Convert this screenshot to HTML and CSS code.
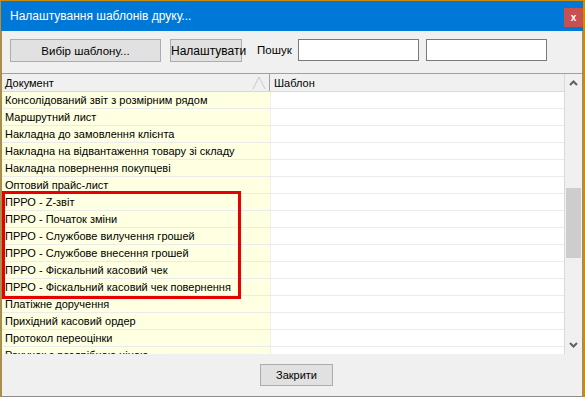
FILE: index.html
```html
<!DOCTYPE html>
<html lang="uk">
<head>
    <meta charset="UTF-8">
    <title>Налаштування шаблонів друку...</title>
    <link rel="stylesheet" href="styles.css">
</head>
<body>

    <div class="window">
        <!-- Title bar -->
        <div class="titlebar">
            <span class="title">Налаштування шаблонів друку...</span>
            <span class="close">x</span>
        </div>

        <div class="body">
            <!-- Toolbar -->
            <div class="toolbar">
                <button class="btn btn-wide">Вибір шаблону...</button>
                <button class="btn btn-setup">Налаштувати</button>
                <span class="search-label">Пошук</span>
                <input class="search" type="text">
                <input class="search" type="text">
            </div>

            <!-- Grid -->
            <div class="grid">
                <div class="grid-main">
                    <div class="grid-head">
                        <div class="col-doc">Документ
                            <svg class="sort" width="14" height="14" viewBox="0 0 14 14">
                                <polyline points="1,13 7,1 13,13" fill="none" stroke="#c8c8c8" stroke-width="1"/>
                            </svg>
                        </div>
                        <div class="col-tpl">Шаблон</div>
                    </div>
                    <div class="rows">
                        <div class="row"><div class="col-doc">Консолідований звіт з розмірним рядом</div><div class="col-tpl"></div></div>
                        <div class="row"><div class="col-doc">Маршрутний лист</div><div class="col-tpl"></div></div>
                        <div class="row"><div class="col-doc">Накладна до замовлення клієнта</div><div class="col-tpl"></div></div>
                        <div class="row"><div class="col-doc">Накладна на відвантаження товару зі складу</div><div class="col-tpl"></div></div>
                        <div class="row"><div class="col-doc">Накладна повернення покупцеві</div><div class="col-tpl"></div></div>
                        <div class="row"><div class="col-doc">Оптовий прайс-лист</div><div class="col-tpl"></div></div>
                        <div class="row"><div class="col-doc">ПРРО - Z-звіт</div><div class="col-tpl"></div></div>
                        <div class="row"><div class="col-doc">ПРРО - Початок зміни</div><div class="col-tpl"></div></div>
                        <div class="row"><div class="col-doc">ПРРО - Службове вилучення грошей</div><div class="col-tpl"></div></div>
                        <div class="row"><div class="col-doc">ПРРО - Службове внесення грошей</div><div class="col-tpl"></div></div>
                        <div class="row"><div class="col-doc">ПРРО - Фіскальний касовий чек</div><div class="col-tpl"></div></div>
                        <div class="row"><div class="col-doc">ПРРО - Фіскальний касовий чек повернення</div><div class="col-tpl"></div></div>
                        <div class="row"><div class="col-doc">Платіжне доручення</div><div class="col-tpl"></div></div>
                        <div class="row"><div class="col-doc">Прихідний касовий ордер</div><div class="col-tpl"></div></div>
                        <div class="row"><div class="col-doc">Протокол переоцінки</div><div class="col-tpl"></div></div>
                        <div class="row"><div class="col-doc">Рахунок з роздрібною ціною</div><div class="col-tpl"></div></div>
                    </div>
                    <!-- highlight frame -->
                    <div class="highlight"></div>
                </div>

                <div class="scrollbar">
                    <svg class="arrow" width="9" height="6" viewBox="0 0 9 6">
                        <polyline points="1,5 4.5,1.5 8,5" fill="none" stroke="#606060" stroke-width="2"/>
                    </svg>
                    <div class="thumb-track">
                        <div class="thumb"></div>
                    </div>
                    <svg class="arrow" width="9" height="6" viewBox="0 0 9 6">
                        <polyline points="1,1 4.5,4.5 8,1" fill="none" stroke="#606060" stroke-width="2"/>
                    </svg>
                </div>
            </div>

            <!-- Footer -->
            <div class="footer">
                <button class="btn btn-close">Закрити</button>
            </div>
        </div>
    </div>

</body>
</html>
```

FILE: styles.css
```css
body {
    margin: 0;
    padding: 0;
    background: #c98b10; /* window behind */
    font-family: "Liberation Sans", Arial, sans-serif;
    font-size: 11px;
    color: #000;
    overflow: hidden;
}

.window {
    margin: 1px 2px 0 1px;
    height: 396px;
    display: flex;
    flex-direction: column;
    background: #f0f0f0;
}

/* Title bar */
.titlebar {
    height: 30px;
    background: #0078d7;
    display: flex;
    align-items: center;
    justify-content: space-between;
    padding-left: 9px;
    flex-shrink: 0;
}
.title {
    color: #fff;
    font-size: 12px;
}
.close {
    width: 19px;
    height: 19px;
    margin-top: 2px;
    background: #c75050;
    color: #fff;
    font-weight: bold;
    font-size: 10px;
    display: flex;
    align-items: center;
    justify-content: center;
}

.body {
    flex: 1;
    display: flex;
    flex-direction: column;
    border: 1px solid #8c8c8c;
    border-top: none;
    min-height: 0;
}

/* Toolbar */
.toolbar {
    height: 42px;
    display: flex;
    align-items: flex-start;
    padding: 8px 0 0 8px;
    box-sizing: border-box;
}
.btn {
    font-family: "Liberation Sans", Arial, sans-serif;
    font-size: 11.5px;
    background: #e1e1e1;
    border: 1px solid #adadad;
    color: #000;
    padding: 0;
    height: 23px;
}
.btn-wide {
    width: 151px;
}
.btn-setup {
    width: 72px;
    margin-left: 9px;
    font-size: 12px;
}
.search-label {
    margin-left: 15px;
    line-height: 22px;
    font-size: 11.5px;
}
.search {
    width: 121px;
    height: 22px;
    box-sizing: border-box;
    border: 1px solid #7a7a7a;
    background: #fff;
    margin-left: 6px;
    padding: 0;
}
.search + .search {
    margin-left: 7px;
}

/* Grid */
.grid {
    height: 281px;
    display: flex;
    border-top: 1px solid #a0a0a0;
    box-sizing: border-box;
    flex-shrink: 0;
}
.grid-main {
    flex: 1;
    position: relative;
    overflow: hidden;
    background: #fff;
}
.grid-head {
    height: 18px;
    display: flex;
    background: #f0f0f0;
    border-bottom: 1px solid #d8d8d8;
    box-sizing: border-box;
}
.grid-head .col-doc {
    background: #f0f0f0;
    position: relative;
    border-right: 1px solid #a0a0a0;
    line-height: 18px;
}
.grid-head .col-tpl {
    background: #f0f0f0;
    line-height: 18px;
}
.sort {
    position: absolute;
    right: 3px;
    top: 2px;
}
.col-doc {
    width: 268px;
    flex-shrink: 0;
    padding-left: 3px;
    box-sizing: border-box;
    background: #ffffe1;
    white-space: nowrap;
    overflow: hidden;
    line-height: 17px;
}
.col-tpl {
    flex: 1;
    padding-left: 3px;
    line-height: 17px;
    border-left: 1px solid #f0f0f0;
}
.row {
    height: 17px;
    display: flex;
    border-bottom: 1px solid #ebebeb;
    box-sizing: border-box;
}
.row .col-doc {
    line-height: 16px;
}

.highlight {
    position: absolute;
    left: 0;
    top: 117px;
    width: 239px;
    height: 108px;
    border: 3px solid #e80000;
    box-sizing: border-box;
}

/* Scrollbar */
.scrollbar {
    width: 17px;
    border-left: 1px solid #d9d9d9;
    background: #f0f0f0;
    display: flex;
    flex-direction: column;
    align-items: center;
    flex-shrink: 0;
}
.arrow {
    margin: 6px 0;
}
.thumb-track {
    flex: 1;
    width: 100%;
    padding-top: 96px;
    box-sizing: border-box;
}
.thumb {
    height: 70px;
    background: #cdcdcd;
    margin: 0 1px;
}

/* Footer */
.footer {
    flex: 1;
    display: flex;
    justify-content: center;
    padding: 10px 0 0 9px;
    box-sizing: border-box;
}
.btn-close {
    width: 73px;
    height: 22px;
    font-size: 11px;
}
```
